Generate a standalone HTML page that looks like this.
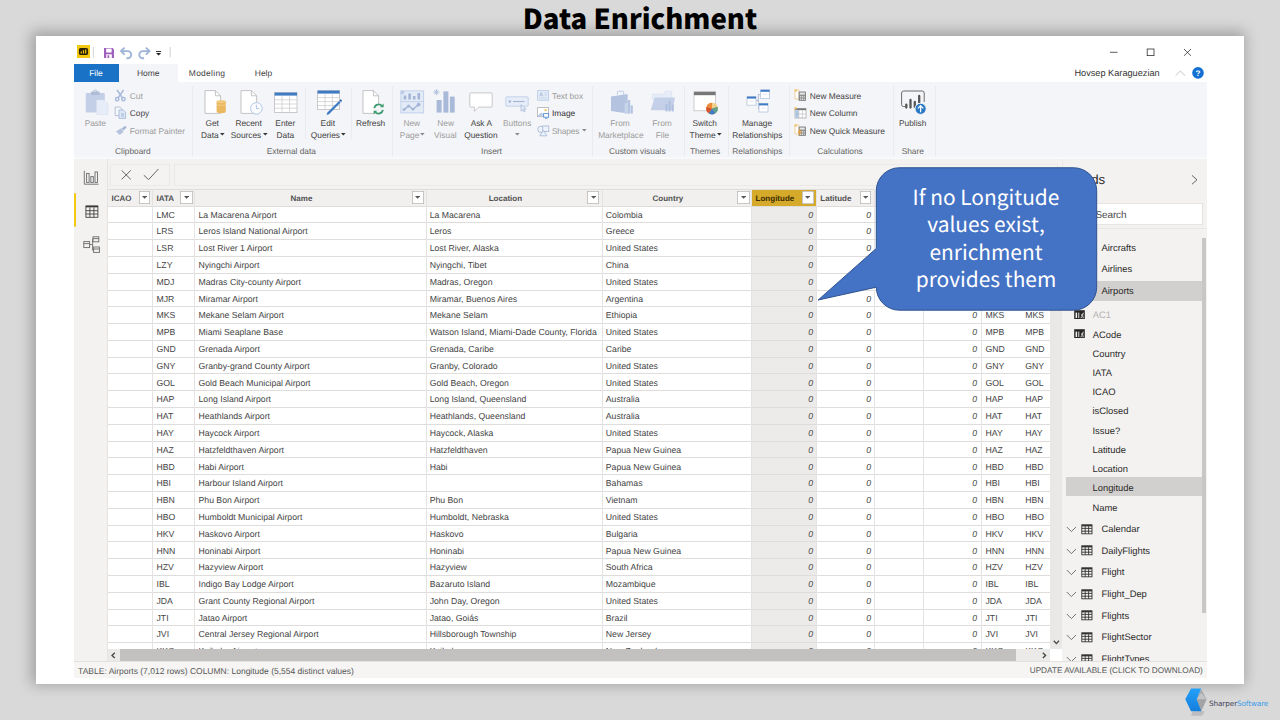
<!DOCTYPE html>
<html lang="en"><head><meta charset="utf-8"><title>Data Enrichment</title>
<style>
html,body{margin:0;padding:0}
body{width:1280px;height:720px;overflow:hidden;background:#d9d9d9;position:relative;font-family:"Liberation Sans",sans-serif;text-rendering:geometricPrecision}
#root{position:absolute;left:0;top:0;width:1280px;height:720px;opacity:.999}
.r{position:absolute;display:block}
.t{position:absolute;white-space:nowrap;display:block}
#win{position:absolute;left:36px;top:36px;width:1208px;height:648px;background:#fff;box-shadow:-2px -2px 13px 3px rgba(0,0,0,.25)}
#title{position:absolute;left:0;top:-2.7px;width:1280px;text-align:center;font-family:"Noto Sans CJK SC","Liberation Sans",sans-serif;font-weight:900;font-size:27.5px;line-height:40px;color:#000;white-space:nowrap}
</style></head><body>

<div id="root"><div id="win"></div>
<div id="title">Data Enrichment</div>
<div class="r" style="left:74.00px;top:63.50px;width:44.50px;height:18.00px;background:#1a72c7;"></div>
<span class="t" style="top:67px;font-size:8.5px;line-height:12px;color:#fff;left:-54.00px;width:300px;text-align:center;">File</span>
<div class="r" style="left:118.50px;top:63.50px;width:59.00px;height:19.50px;background:#f4f5f8;"></div>
<span class="t" style="top:67px;font-size:8.45px;line-height:12px;color:#444;left:-1.80px;width:300px;text-align:center;">Home</span>
<span class="t" style="top:67px;font-size:8.45px;line-height:12px;color:#444;letter-spacing:0.28px;left:57.10px;width:300px;text-align:center;">Modeling</span>
<span class="t" style="top:67px;font-size:8.45px;line-height:12px;color:#444;left:113.50px;width:300px;text-align:center;">Help</span>
<div class="r" style="left:74.00px;top:82.00px;width:1133.00px;height:77.40px;background:#f4f5f8;"></div>
<div class="r" style="left:74.00px;top:156.20px;width:1133.00px;height:3.20px;background:linear-gradient(#f4f5f8,#fafbfc);"></div>
<div class="r" style="left:74.00px;top:159.40px;width:1133.00px;height:519.00px;background:#f3f2f1;"></div>
<span class="t" style="top:67px;font-size:9.2px;line-height:12px;color:#333;left:1074.40px;">Hovsep Karaguezian</span>
<svg class="r" style="left:1105.00px;top:45.00px" width="95" height="15" viewBox="0 0 95 15"><g stroke="#333" stroke-width="0.8" fill="none"><path d="M5 7.3h7.5"/><rect x="42.2" y="4" width="6.8" height="6.6"/><path d="M79 4l7 6.8M86 4l-7 6.8"/></g></svg>
<svg class="r" style="left:1172.00px;top:66.00px" width="36" height="14" viewBox="0 0 36 14"><path d="M3.8 9.6l4.6-4.6 4.6 4.6" stroke="#bdbdbd" stroke-width="0.9" fill="none"/><circle cx="26" cy="6.9" r="5.8" fill="#1170d2"/></svg>
<span class="t" style="top:68px;font-size:8px;line-height:11px;color:#fff;font-weight:bold;left:1048.00px;width:300px;text-align:center;">?</span>
<svg class="r" style="left:76.00px;top:44.00px" width="100" height="16" viewBox="0 0 100 16">
<rect x="1" y="1" width="13" height="13" fill="#f2c811"/>
<rect x="2.900" y="4.100" width="9.200" height="6.800" rx="1.600" fill="#2b2300"/>
<path d="M5.300 9.600v-2M7.500 9.600v-3.400M9.700 9.600v-4.200" stroke="#f2c811" stroke-width="1.200"/>
<path d="M17.4 3v10.5" stroke="#c8c8c8" stroke-width="0.8"/>
<path d="M28 4h8.600l1.400 1.400v8.600h-10z" fill="#a061bd"/><rect x="30.200" y="4.600" width="5.400" height="3.900" fill="#fff"/><rect x="30.200" y="10.300" width="5.600" height="3.700" fill="#fff"/><rect x="31.500" y="11.200" width="1.700" height="2.800" fill="#a061bd"/>
<path d="M45.2 8.2h6.4a3.6 3.6 0 0 1 0 7.2h-1.2" fill="none" stroke="#9db4d8" stroke-width="1.9" transform="translate(0,-1.1)"/><path d="M48.6 3.600l-3.600 3.500 3.600 3.500" fill="none" stroke="#9db4d8" stroke-width="1.9"/>
<path d="M73.3 8.2h-6.4a3.6 3.6 0 0 0 0 7.2h1.2" fill="none" stroke="#9db4d8" stroke-width="1.9" transform="translate(0,-1.1)"/><path d="M69.900 3.600l3.600 3.500-3.600 3.500" fill="none" stroke="#9db4d8" stroke-width="1.9"/>
<path d="M80 7.500h5.200" stroke="#222" stroke-width="0.9"/><path d="M80 8.900h5.200l-2.600 2.500z" fill="#222"/>
<path d="M94.2 3v10.5" stroke="#c8c8c8" stroke-width="0.8"/>
</svg>
<svg class="r" style="left:84.00px;top:89.00px" width="26" height="27" viewBox="0 0 26 27"><rect x="1.800" y="4" width="19" height="19.600" rx="1" fill="#c3cfe6"/><rect x="7" y="2.400" width="8.600" height="3.600" rx=".8" fill="#aebcd8"/><rect x="9.700" y="1.200" width="3.200" height="2.400" rx="1" fill="none" stroke="#aebcd8" stroke-width="0.9"/>
<path d="M12.600 11h7.600l3.800 3.800v10.700h-11.400z" fill="#e6edf8" stroke="#d6dff0" stroke-width="0.6"/></svg>
<span class="t" style="top:117px;font-size:8.35px;line-height:12px;color:#9c9c9c;left:-54.70px;width:300px;text-align:center;">Paste</span>
<svg class="r" style="left:114.00px;top:89.00px" width="13" height="13" viewBox="0 0 13 13"><g fill="none" stroke="#a6b9db" stroke-width="1.400"><path d="M3 1l5.600 8M9.600 1L4 9"/><circle cx="3.2" cy="10.2" r="1.7"/><circle cx="9.4" cy="10.2" r="1.7"/></g></svg>
<span class="t" style="top:90px;font-size:8.35px;line-height:12px;color:#9c9c9c;left:129.75px;">Cut</span>
<svg class="r" style="left:114.00px;top:106.00px" width="13" height="13" viewBox="0 0 13 13"><path d="M1.2 1h4.6l2 2v6.6h-6.6z" fill="#f4f7fc" stroke="#aab4c6" stroke-width="0.8"/><path d="M5 4h4.4l2.2 2.2v6.2h-6.6z" fill="#dfe8f6" stroke="#9fb2d2" stroke-width="0.8"/><path d="M7 8h3M7 10h3" stroke="#7f9fd0" stroke-width="0.7"/></svg>
<span class="t" style="top:107px;font-size:8.35px;line-height:12px;color:#444;left:129.75px;">Copy</span>
<svg class="r" style="left:114.50px;top:124.50px" width="13" height="11" viewBox="0 0 13 11"><path d="M1 6.5l5-3.2 2.6 3.4-3.8 3.4z" fill="#b5c3df"/><path d="M6.6 3.6l3.6-2.8 1.4 1.6-3.2 3.2z" fill="#a5b6d8"/></svg>
<span class="t" style="top:125px;font-size:8.35px;line-height:12px;color:#9c9c9c;left:129.75px;">Format Painter</span>
<span class="t" style="top:145px;font-size:8.35px;line-height:12px;color:#666;left:-17.10px;width:300px;text-align:center;">Clipboard</span>
<div class="r" style="left:192.30px;top:86.00px;width:0.80px;height:70.00px;background:#eaebef;"></div>
<svg class="r" style="left:203.50px;top:89.60px" width="24" height="25" viewBox="0 0 24 25"><path d="M1 .6h10.4l5.2 5.2v17.6h-15.6z" fill="#fff" stroke="#bdbdbd" stroke-width="0.9"/><path d="M11.4 .6v5.2h5.2" fill="none" stroke="#bdbdbd" stroke-width="0.9"/><path d="M12.6 11.6v10a4.6 1.6 0 0 0 9.2 0v-10z" fill="#e9b85f"/><ellipse cx="17.2" cy="11.6" rx="4.6" ry="1.6" fill="#f0c87e"/><path d="M12.6 13.8a4.6 1.6 0 0 0 9.2 0" fill="none" stroke="#f7ddb0" stroke-width="0.6"/></svg>
<span class="t" style="top:117px;font-size:8.35px;line-height:12px;color:#444;left:62.20px;width:300px;text-align:center;">Get</span>
<span class="t" style="top:129px;font-size:8.35px;line-height:12px;color:#444;left:59.80px;width:300px;text-align:center;">Data</span>
<svg class="r" style="left:220.20px;top:133.00px" width="5" height="3" viewBox="0 0 5 3"><path d="M0 0h4.6l-2.3 2.6z" fill="#333"/></svg>
<svg class="r" style="left:239.50px;top:89.60px" width="24" height="26" viewBox="0 0 24 26"><path d="M1 .6h10.4l5.2 5.2v17.6h-15.6z" fill="#fff" stroke="#bdbdbd" stroke-width="0.9"/><path d="M11.4 .6v5.2h5.2" fill="none" stroke="#bdbdbd" stroke-width="0.9"/><circle cx="16.4" cy="18.4" r="5.8" fill="#fbfcfe" stroke="#a9c0e4" stroke-width="0.9"/><path d="M16.4 14.8v3.8h2.8" fill="none" stroke="#a9c0e4" stroke-width="0.9"/></svg>
<span class="t" style="top:117px;font-size:8.35px;line-height:12px;color:#444;left:98.60px;width:300px;text-align:center;">Recent</span>
<span class="t" style="top:129px;font-size:8.35px;line-height:12px;color:#444;left:96.00px;width:300px;text-align:center;">Sources</span>
<svg class="r" style="left:262.60px;top:133.00px" width="5" height="3" viewBox="0 0 5 3"><path d="M0 0h4.6l-2.3 2.6z" fill="#333"/></svg>
<svg class="r" style="left:273.50px;top:91.50px" width="24" height="22" viewBox="0 0 24 22"><rect x=".6" y=".6" width="22.4" height="20" fill="#fff" stroke="#bdbdbd" stroke-width="0.8"/><rect x=".6" y=".6" width="22.4" height="3" fill="#3f7bc4"/><path d="M.6 7.8h22.4M.6 12h22.4M.6 16.2h22.4M8 3.6v17M15.6 3.6v17" stroke="#c9c9c9" stroke-width="0.7" fill="none"/></svg>
<span class="t" style="top:117px;font-size:8.35px;line-height:12px;color:#444;left:135.30px;width:300px;text-align:center;">Enter</span>
<span class="t" style="top:129px;font-size:8.35px;line-height:12px;color:#444;left:135.30px;width:300px;text-align:center;">Data</span>
<div class="r" style="left:305.20px;top:88.00px;width:0.80px;height:51.00px;background:#eaebef;"></div>
<svg class="r" style="left:316.50px;top:90.00px" width="25" height="25" viewBox="0 0 25 25"><rect x=".6" y=".6" width="22" height="19" fill="#fff" stroke="#bdbdbd" stroke-width="0.8"/><rect x=".6" y=".6" width="22" height="3" fill="#3f7bc4"/><path d="M.6 7.6h22M.6 11.6h22M.6 15.6h22M8 3.6v16M15.4 3.6v16" stroke="#c9c9c9" stroke-width="0.7" fill="none"/><path d="M10.4 22.6l11.6-11.6 1.6 1.6-11.6 11.6-2.4.8z" fill="#3f7bc4"/><path d="M22.4 10.4l1.2-1.2 1.6 1.6-1.2 1.2z" fill="#2f62a4"/></svg>
<span class="t" style="top:117px;font-size:8.35px;line-height:12px;color:#444;left:177.80px;width:300px;text-align:center;">Edit</span>
<span class="t" style="top:129px;font-size:8.35px;line-height:12px;color:#444;left:175.40px;width:300px;text-align:center;">Queries</span>
<svg class="r" style="left:341.30px;top:133.00px" width="5" height="3" viewBox="0 0 5 3"><path d="M0 0h4.6l-2.3 2.6z" fill="#333"/></svg>
<span class="t" style="top:145px;font-size:8.35px;line-height:12px;color:#666;left:141.40px;width:300px;text-align:center;">External data</span>
<div class="r" style="left:350.85px;top:88.00px;width:0.80px;height:51.00px;background:#eaebef;"></div>
<svg class="r" style="left:361.50px;top:89.60px" width="26" height="26" viewBox="0 0 26 26"><path d="M1 .6h10.4l5.2 5.2v17.6h-15.6z" fill="#fff" stroke="#bdbdbd" stroke-width="0.9"/><path d="M11.4 .6v5.2h5.2" fill="none" stroke="#bdbdbd" stroke-width="0.9"/><circle cx="16.6" cy="19" r="5.6" fill="#f4f5f8"/><path d="M12.4 18.2a4.3 4.3 0 0 1 7.6-2.2" fill="none" stroke="#3d9b6f" stroke-width="1.7"/><path d="M21.6 13.6v3.6h-3.6z" fill="#3d9b6f"/><path d="M20.8 19.8a4.3 4.3 0 0 1-7.6 2.2" fill="none" stroke="#3d9b6f" stroke-width="1.7"/><path d="M11.6 24.4v-3.6h3.6z" fill="#3d9b6f"/></svg>
<span class="t" style="top:117px;font-size:8.35px;line-height:12px;color:#444;left:220.60px;width:300px;text-align:center;">Refresh</span>
<div class="r" style="left:392.35px;top:86.00px;width:0.80px;height:70.00px;background:#eaebef;"></div>
<svg class="r" style="left:399.50px;top:90.00px" width="25" height="24" viewBox="0 0 25 24"><rect x=".9" y=".9" width="22.8" height="22" fill="#e3ebf7" stroke="#b9c9e6" stroke-width="0.8"/><path d="M.9 11.6h22.8" stroke="#b9c9e6" stroke-width="0.8"/><path d="M5 9.6v-4.2M9.6 9.6v-6M14.2 9.6v-3.6M18.8 9.6v-6.6" stroke="#a3b5d6" stroke-width="2.6"/><path d="M4 19.6l4.6-3.6 4.4 3.2 5.6-4.6" fill="none" stroke="#a3b5d6" stroke-width="1.400"/><circle cx="4" cy="19.600" r="1.400" fill="#a3b5d6"/><circle cx="8.600" cy="16" r="1.500" fill="#a3b5d6"/><circle cx="13" cy="19.200" r="1.400" fill="#a3b5d6"/><circle cx="18.600" cy="14.600" r="1.900" fill="#a3b5d6"/><path d="M2.4 0v5M0 2.4h5M.7.7l3.4 3.4M4.1.7L.7 4.1" stroke="#b5c5e3" stroke-width="0.7"/></svg>
<span class="t" style="top:117px;font-size:8.35px;line-height:12px;color:#9c9c9c;left:261.75px;width:300px;text-align:center;">New</span>
<span class="t" style="top:129px;font-size:8.35px;line-height:12px;color:#9c9c9c;left:259.60px;width:300px;text-align:center;">Page</span>
<svg class="r" style="left:420.40px;top:133.00px" width="5" height="3" viewBox="0 0 5 3"><path d="M0 0h4.6l-2.3 2.6z" fill="#888"/></svg>
<svg class="r" style="left:432.50px;top:89.20px" width="23" height="25" viewBox="0 0 23 25"><rect x="3.600" y="11" width="5" height="12.600" fill="#a9bad9"/><rect x="10.400" y="2.400" width="5" height="21.200" fill="#a9bad9"/><rect x="16.900" y="7.600" width="4.800" height="16" fill="#a9bad9"/><path d="M3.4.2v6M.4 3.2h6M1.3 1.1l4.2 4.2M5.5 1.1L1.3 5.3" stroke="#b0c1e0" stroke-width="1"/></svg>
<span class="t" style="top:117px;font-size:8.35px;line-height:12px;color:#9c9c9c;left:295.60px;width:300px;text-align:center;">New</span>
<span class="t" style="top:129px;font-size:8.35px;line-height:12px;color:#9c9c9c;left:295.40px;width:300px;text-align:center;">Visual</span>
<svg class="r" style="left:469.00px;top:91.50px" width="26" height="21" viewBox="0 0 26 21"><path d="M1.6.9h20.8a.8.8 0 0 1 .8.8v12.6a.8.8 0 0 1-.8.8h-12.8l-4.2 4.2v-4.2h-3.8a.8.8 0 0 1-.8-.8v-12.6a.8.8 0 0 1 .8-.8z" fill="#fff" stroke="#c2c2c2" stroke-width="0.9"/></svg>
<span class="t" style="top:117px;font-size:8.35px;line-height:12px;color:#444;left:331.30px;width:300px;text-align:center;">Ask A</span>
<span class="t" style="top:129px;font-size:8.35px;line-height:12px;color:#444;left:330.90px;width:300px;text-align:center;">Question</span>
<svg class="r" style="left:505.00px;top:95.60px" width="25" height="17" viewBox="0 0 25 17"><rect x=".8" y=".8" width="22.4" height="9.4" rx="1" fill="#e6edf8" stroke="#b9c9e6" stroke-width="0.8"/><circle cx="4.8" cy="5.5" r="1.3" fill="#a3b5d6"/><path d="M8 5.5h11.6" stroke="#a3b5d6" stroke-width="1.1"/><path d="M16 8.6v6.6l1.8-1.6 1.2 2.4 1-.5-1.2-2.3h2.3z" fill="#e6edf8" stroke="#a3b5d6" stroke-width="0.7"/></svg>
<span class="t" style="top:117px;font-size:8.35px;line-height:12px;color:#9c9c9c;left:367.20px;width:300px;text-align:center;">Buttons</span>
<svg class="r" style="left:514.70px;top:133.00px" width="5" height="3" viewBox="0 0 5 3"><path d="M0 0h4.6l-2.3 2.6z" fill="#888"/></svg>
<svg class="r" style="left:536.80px;top:89.60px" width="13" height="11" viewBox="0 0 13 11"><rect x=".6" y=".6" width="11" height="9.6" fill="#e3ebf7" stroke="#b9c9e6" stroke-width="0.8"/><path d="M2.6 6.4l1.6-4 1.6 4M3.2 5h2" fill="none" stroke="#a3b5d6" stroke-width="0.7"/><path d="M7.4 3h2.8M7.4 5h2.8M2.4 8h7.8" stroke="#b9c9e6" stroke-width="0.6"/></svg>
<span class="t" style="top:90px;font-size:8.35px;line-height:12px;color:#9c9c9c;left:552.00px;">Text box</span>
<svg class="r" style="left:536.80px;top:106.60px" width="13" height="12" viewBox="0 0 13 12"><rect x=".6" y=".6" width="11" height="9" fill="#fff" stroke="#b0b0b0" stroke-width="0.8"/><circle cx="8.600" cy="3.200" r="1.1" fill="#f0c04f"/><path d="M1 9.4l3.2-3.4 2.4 2.2" fill="#b8cdea" stroke="#7ea2d8" stroke-width="0.6"/><rect x="6.6" y="6.6" width="5" height="3.6" fill="#fff" stroke="#5b8fd6" stroke-width="0.9"/><path d="M8 11.4h2.4" stroke="#5b8fd6" stroke-width="0.8"/></svg>
<span class="t" style="top:107px;font-size:8.35px;line-height:12px;color:#333;left:552.00px;">Image</span>
<svg class="r" style="left:536.80px;top:124.60px" width="13" height="12" viewBox="0 0 13 12"><g fill="#eef2fa" stroke="#a3b5d6" stroke-width="0.8"><circle cx="4" cy="4.4" r="3.2"/><rect x="5.8" y="1" width="6" height="5.6"/><path d="M6.4 5.4l3.6 5.4h-7.2z"/></g></svg>
<span class="t" style="top:125px;font-size:8.35px;line-height:12px;color:#9c9c9c;letter-spacing:-0.2px;left:552.00px;">Shapes</span>
<svg class="r" style="left:581.60px;top:128.80px" width="5" height="3" viewBox="0 0 5 3"><path d="M0 0h4.6l-2.3 2.6z" fill="#888"/></svg>
<span class="t" style="top:145px;font-size:8.35px;line-height:12px;color:#666;left:341.50px;width:300px;text-align:center;">Insert</span>
<div class="r" style="left:592.35px;top:86.00px;width:0.80px;height:70.00px;background:#eaebef;"></div>
<svg class="r" style="left:609.50px;top:89.60px" width="24" height="25" viewBox="0 0 24 25"><path d="M7.4 4.6v-2.4a1 1 0 0 1 1-1h4.2a1 1 0 0 1 1 1v2.4" fill="none" stroke="#b7c6e2" stroke-width="0.9"/><path d="M1 6.4l16.6-2.4v19.6l-16.6-2.6z" fill="#b3c3e0"/><rect x="14.6" y="13" width="2.6" height="10.6" fill="#c9d5ea"/><rect x="17.8" y="10" width="2.4" height="13.6" fill="#b3c3e0"/><rect x="20.6" y="15.4" width="2.2" height="8.2" fill="#b3c3e0"/></svg>
<span class="t" style="top:117px;font-size:8.35px;line-height:12px;color:#9c9c9c;left:470.00px;width:300px;text-align:center;">From</span>
<span class="t" style="top:129px;font-size:8.35px;line-height:12px;color:#9c9c9c;left:470.90px;width:300px;text-align:center;">Marketplace</span>
<svg class="r" style="left:648px;top:88px" width="30" height="26" viewBox="648 88 30 26"><path d="M652.400 94.200h10.800l2.400-3h6.200v8h-19.400z" fill="#e6edf8" stroke="#d5dff0" stroke-width="0.6"/><path d="M654.600 97.400h20.400l-2.400 12.800h-21.800z" fill="#c3d0e8"/><rect x="665.400" y="104" width="2.100" height="7.400" fill="#b0c0de"/><rect x="668.500" y="101" width="2.100" height="10.400" fill="#b0c0de"/><rect x="671.700" y="104.600" width="2.100" height="6.800" fill="#b0c0de"/></svg>
<span class="t" style="top:117px;font-size:8.35px;line-height:12px;color:#9c9c9c;left:512.00px;width:300px;text-align:center;">From</span>
<span class="t" style="top:129px;font-size:8.35px;line-height:12px;color:#9c9c9c;left:512.50px;width:300px;text-align:center;">File</span>
<span class="t" style="top:145px;font-size:8.35px;line-height:12px;color:#666;left:487.30px;width:300px;text-align:center;">Custom visuals</span>
<div class="r" style="left:683.60px;top:86.00px;width:0.80px;height:70.00px;background:#eaebef;"></div>
<svg class="r" style="left:693.00px;top:91.40px" width="26" height="25" viewBox="0 0 26 25"><rect x="1" y=".8" width="21.6" height="19" fill="#fff" stroke="#c2c2c2" stroke-width="0.8"/><rect x="1" y=".8" width="21.6" height="3.4" fill="#777"/><circle cx="19" cy="17.6" r="5.8" fill="#e9b35a"/><path d="M19 17.6v-5.8a5.8 5.8 0 0 1 5.5 4z" fill="#f1d08c"/><path d="M19 17.6l5.5-1.8a5.8 5.8 0 0 1-2.1 6.5z" fill="#5fa08c"/><path d="M19 17.6l3.4 4.7a5.8 5.8 0 0 1-6.8 0z" fill="#3f7bc4"/><path d="M19 17.6l-3.4 4.7a5.8 5.8 0 0 1-2.1-6.5z" fill="#d9542c"/><path d="M19 17.6l-5.5-1.8a5.800 5.800 0 0 1 5.500-4z" fill="#ee8b3a"/></svg>
<span class="t" style="top:117px;font-size:8.35px;line-height:12px;color:#444;left:554.70px;width:300px;text-align:center;">Switch</span>
<span class="t" style="top:129px;font-size:8.35px;line-height:12px;color:#444;left:552.60px;width:300px;text-align:center;">Theme</span>
<svg class="r" style="left:717.00px;top:133.00px" width="5" height="3" viewBox="0 0 5 3"><path d="M0 0h4.6l-2.3 2.6z" fill="#333"/></svg>
<span class="t" style="top:145px;font-size:8.35px;line-height:12px;color:#666;left:555.00px;width:300px;text-align:center;">Themes</span>
<div class="r" style="left:728.35px;top:86.00px;width:0.80px;height:70.00px;background:#eaebef;"></div>
<svg class="r" style="left:745.50px;top:88.80px" width="26" height="25" viewBox="0 0 26 25"><path d="M10 11.6h2.4v-6h2.4M12.4 11.600v8.4h2" fill="none" stroke="#9fb1d2" stroke-width="0.8"/><rect x="1" y="7.6" width="9" height="8.6" fill="#fff" stroke="#b5c3dc" stroke-width="0.8"/><rect x="1" y="7.6" width="9" height="2" fill="#3f7bc4"/><path d="M3.4 12.2h4.2" stroke="#d0d8e8" stroke-width="0.6"/><rect x="14.6" y="0.8" width="9" height="8.6" fill="#fff" stroke="#b5c3dc" stroke-width="0.8"/><rect x="14.6" y="0.8" width="9" height="2" fill="#3f7bc4"/><path d="M17.0 5.3999999999999995h4.2" stroke="#d0d8e8" stroke-width="0.6"/><rect x="13" y="14.4" width="9" height="8.6" fill="#fff" stroke="#b5c3dc" stroke-width="0.8"/><rect x="13" y="14.4" width="9" height="2" fill="#3f7bc4"/><path d="M15.4 19.0h4.2" stroke="#d0d8e8" stroke-width="0.6"/></svg>
<span class="t" style="top:117px;font-size:8.35px;line-height:12px;color:#444;left:607.00px;width:300px;text-align:center;">Manage</span>
<span class="t" style="top:129px;font-size:8.35px;line-height:12px;color:#444;left:607.40px;width:300px;text-align:center;">Relationships</span>
<span class="t" style="top:145px;font-size:8.35px;line-height:12px;color:#666;left:607.40px;width:300px;text-align:center;">Relationships</span>
<div class="r" style="left:788.60px;top:86.00px;width:0.80px;height:70.00px;background:#eaebef;"></div>
<svg class="r" style="left:794.40px;top:89.40px" width="13" height="13" viewBox="0 0 13 13"><path d="M1 1h4v9h-4z" fill="#fff" stroke="#e8c07a" stroke-width="0.7"/><rect x=".6" y=".4" width="2.4" height="2.2" fill="#f0c46e"/><rect x="4.6" y="2.4" width="7.4" height="9.6" rx=".8" fill="#8a8a8a"/><rect x="5.8" y="3.6" width="5" height="2" fill="#e8e8e8"/><path d="M6 7.400h1.200M7.800 7.400h1.200M9.600 7.400h1.200M6 9h1.200M7.800 9h1.200M9.600 9h1.200M6 10.600h1.200M7.800 10.600h1.200M9.600 10.600h1.200" stroke="#e8e8e8" stroke-width="0.9"/></svg>
<span class="t" style="top:90px;font-size:8.35px;line-height:12px;color:#444;left:809.75px;">New Measure</span>
<svg class="r" style="left:794.40px;top:106.60px" width="13" height="12" viewBox="0 0 13 12"><rect x="1" y="1.400" width="11" height="9.600" fill="#fff" stroke="#9e9e9e" stroke-width="0.7"/><rect x="1" y="1.400" width="11" height="1.800" fill="#777"/><rect x="1.400" y="3.400" width="3.200" height="7.400" fill="#a9c6ea"/><path d="M4.800 3.200v7.800M8.400 3.200v7.800M1 7h11" stroke="#b5b5b5" stroke-width="0.6"/><rect x=".4" y=".2" width="2.400" height="2.200" fill="#f0c46e"/></svg>
<span class="t" style="top:107px;font-size:8.35px;line-height:12px;color:#444;left:809.75px;">New Column</span>
<svg class="r" style="left:794.40px;top:124.00px" width="13" height="13" viewBox="0 0 13 13"><path d="M1 1h4v9h-4z" fill="#fff" stroke="#e8c07a" stroke-width="0.7"/><rect x=".6" y=".4" width="2.400" height="2.200" fill="#f0c46e"/><rect x="4.600" y="2.400" width="7.400" height="9.600" rx=".8" fill="#8a8a8a"/><rect x="5.800" y="3.600" width="5" height="2" fill="#e8e8e8"/><path d="M6 7.400h4.800M6 9h4.800M6 10.600h4.800" stroke="#e8e8e8" stroke-width="0.9" stroke-dasharray="1.2 .6"/><path d="M6.400 4.600l-3 4h2.200l-1.200 3.600 3.600-4.800h-2.200z" fill="#f0a030"/></svg>
<span class="t" style="top:125px;font-size:8.35px;line-height:12px;color:#444;left:809.75px;">New Quick Measure</span>
<span class="t" style="top:145px;font-size:8.35px;line-height:12px;color:#666;left:690.00px;width:300px;text-align:center;">Calculations</span>
<div class="r" style="left:892.60px;top:86.00px;width:0.80px;height:70.00px;background:#eaebef;"></div>
<svg class="r" style="left:899.50px;top:90.40px" width="28" height="25" viewBox="0 0 28 25"><path d="M5 16.600h-1.400a2 2 0 0 1-2-2v-11.600a2 2 0 0 1 2-2h18.600a2 2 0 0 1 2 2v9" fill="none" stroke="#6a6a6a" stroke-width="1"/><path d="M6.300 17.600v-3M10.500 17.600v-7.600M14.800 17v-5M19.200 12.600v-6.600" stroke="#555" stroke-width="2.300" stroke-linecap="round"/><circle cx="20.600" cy="18.800" r="5.600" fill="#2b78c5" stroke="#f4f5f8" stroke-width="1"/><path d="M20.600 22.200v-6.200M17.900 18.400l2.700-2.800 2.700 2.800" fill="none" stroke="#fff" stroke-width="1.300"/></svg>
<span class="t" style="top:117px;font-size:8.35px;line-height:12px;color:#444;left:762.70px;width:300px;text-align:center;">Publish</span>
<span class="t" style="top:145px;font-size:8.35px;line-height:12px;color:#666;left:762.80px;width:300px;text-align:center;">Share</span>
<div class="r" style="left:934.60px;top:86.00px;width:0.80px;height:70.00px;background:#eaebef;"></div>
<div class="r" style="left:106.60px;top:159.40px;width:0.80px;height:502.60px;background:#e6e4e2;"></div>
<div class="r" style="left:73.70px;top:193.30px;width:2.50px;height:34.10px;background:#f2c811;border-radius:1.2px"></div>
<svg class="r" style="left:83.00px;top:170.00px" width="17" height="16" viewBox="0 0 17 16"><g fill="none" stroke="#6a6a6a" stroke-width="0.9"><path d="M1.300 .8v13.400h14.200"/><rect x="3.600" y="3.400" width="2.500" height="9"/><rect x="7.800" y="6.600" width="2.500" height="5.800"/><rect x="12" y="2" width="2.500" height="10.400"/></g></svg>
<svg class="r" style="left:84.60px;top:204.60px" width="14" height="13.4" viewBox="0 0 14 13.4"><g fill="none" stroke="#3a3a3a" stroke-width="0.85"><rect x=".9" y=".9" width="12" height="11.400"/><path d="M.9 5.700h12M.9 9h12M4.900 2.400v9.900M8.900 2.400v9.900"/><path d="M.9 1.600h12" stroke-width="1.500"/></g></svg>
<svg class="r" style="left:82.60px;top:236.40px" width="18" height="17.4" viewBox="0 0 18 17.4"><g fill="#f3f2f1" stroke="#6a6a6a" stroke-width="0.9"><path d="M6.600 8.600h3v-5.400h1.600M9.600 8.600v5.600h1.600" fill="none"/><rect x=".8" y="5.600" width="5.800" height="6"/><rect x="10" y=".8" width="5.800" height="5"/><rect x="10.600" y="11" width="5.800" height="5.400"/><path d="M.8 7.600h5.800M10 2.600h5.800M10.600 13h5.800" fill="none"/></g></svg>
<div class="r" style="left:110.25px;top:164.40px;width:59.75px;height:21.20px;background:#f4f3f2;box-shadow:inset 0 0 0 .8px #e9e7e5"></div>
<div class="r" style="left:174.40px;top:164.40px;width:883.60px;height:21.20px;background:#f4f3f2;box-shadow:inset 0 0 0 .8px #e9e7e5"></div>
<svg class="r" style="left:120.00px;top:167.00px" width="42" height="14" viewBox="0 0 42 14"><g fill="none" stroke="#555" stroke-width="0.9"><path d="M1.600 3.400l9.200 9M10.800 3.400l-9.200 9"/><path d="M23.800 8.200l4.800 4.400 9.800-10.600"/></g></svg>
<div class="r" style="left:107.6px;top:189.3px;width:942.4px;height:459.45px;overflow:hidden;background:#fff">
<div class="r" style="left:-107.6px;top:-189.3px;width:1280px;height:720px">
<div class="r" style="left:107.60px;top:189.30px;width:942.40px;height:16.70px;background:#f1f0ef;"></div>
<div class="r" style="left:751.50px;top:189.30px;width:64.80px;height:16.70px;background:#d5a92a;"></div>
<div class="r" style="left:751.90px;top:206.00px;width:64.40px;height:442.75px;background:#edebe9;"></div>
<div class="r" style="left:107.60px;top:188.90px;width:942.40px;height:0.80px;background:#dfdddb;"></div>
<div class="r" style="left:107.60px;top:205.55px;width:942.40px;height:0.90px;background:#dfdddb;"></div>
<div class="r" style="left:107.60px;top:222.34px;width:942.40px;height:0.90px;background:#dfdddb;"></div>
<div class="r" style="left:107.60px;top:239.13px;width:942.40px;height:0.90px;background:#dfdddb;"></div>
<div class="r" style="left:107.60px;top:255.92px;width:942.40px;height:0.90px;background:#dfdddb;"></div>
<div class="r" style="left:107.60px;top:272.71px;width:942.40px;height:0.90px;background:#dfdddb;"></div>
<div class="r" style="left:107.60px;top:289.50px;width:942.40px;height:0.90px;background:#dfdddb;"></div>
<div class="r" style="left:107.60px;top:306.29px;width:942.40px;height:0.90px;background:#dfdddb;"></div>
<div class="r" style="left:107.60px;top:323.08px;width:942.40px;height:0.90px;background:#dfdddb;"></div>
<div class="r" style="left:107.60px;top:339.87px;width:942.40px;height:0.90px;background:#dfdddb;"></div>
<div class="r" style="left:107.60px;top:356.66px;width:942.40px;height:0.90px;background:#dfdddb;"></div>
<div class="r" style="left:107.60px;top:373.45px;width:942.40px;height:0.90px;background:#dfdddb;"></div>
<div class="r" style="left:107.60px;top:390.24px;width:942.40px;height:0.90px;background:#dfdddb;"></div>
<div class="r" style="left:107.60px;top:407.03px;width:942.40px;height:0.90px;background:#dfdddb;"></div>
<div class="r" style="left:107.60px;top:423.82px;width:942.40px;height:0.90px;background:#dfdddb;"></div>
<div class="r" style="left:107.60px;top:440.61px;width:942.40px;height:0.90px;background:#dfdddb;"></div>
<div class="r" style="left:107.60px;top:457.40px;width:942.40px;height:0.90px;background:#dfdddb;"></div>
<div class="r" style="left:107.60px;top:474.19px;width:942.40px;height:0.90px;background:#dfdddb;"></div>
<div class="r" style="left:107.60px;top:490.98px;width:942.40px;height:0.90px;background:#dfdddb;"></div>
<div class="r" style="left:107.60px;top:507.77px;width:942.40px;height:0.90px;background:#dfdddb;"></div>
<div class="r" style="left:107.60px;top:524.56px;width:942.40px;height:0.90px;background:#dfdddb;"></div>
<div class="r" style="left:107.60px;top:541.35px;width:942.40px;height:0.90px;background:#dfdddb;"></div>
<div class="r" style="left:107.60px;top:558.14px;width:942.40px;height:0.90px;background:#dfdddb;"></div>
<div class="r" style="left:107.60px;top:574.93px;width:942.40px;height:0.90px;background:#dfdddb;"></div>
<div class="r" style="left:107.60px;top:591.72px;width:942.40px;height:0.90px;background:#dfdddb;"></div>
<div class="r" style="left:107.60px;top:608.51px;width:942.40px;height:0.90px;background:#dfdddb;"></div>
<div class="r" style="left:107.60px;top:625.30px;width:942.40px;height:0.90px;background:#dfdddb;"></div>
<div class="r" style="left:107.60px;top:642.09px;width:942.40px;height:0.90px;background:#dfdddb;"></div>
<div class="r" style="left:107.60px;top:658.88px;width:942.40px;height:0.90px;background:#dfdddb;"></div>
<div class="r" style="left:151.80px;top:189.30px;width:0.90px;height:459.45px;background:#e5e3e1;"></div>
<div class="r" style="left:193.95px;top:189.30px;width:0.90px;height:459.45px;background:#e5e3e1;"></div>
<div class="r" style="left:425.85px;top:189.30px;width:0.90px;height:459.45px;background:#e5e3e1;"></div>
<div class="r" style="left:601.75px;top:189.30px;width:0.90px;height:459.45px;background:#e5e3e1;"></div>
<div class="r" style="left:751.05px;top:189.30px;width:0.90px;height:459.45px;background:#e5e3e1;"></div>
<div class="r" style="left:815.85px;top:189.30px;width:0.90px;height:459.45px;background:#e5e3e1;"></div>
<div class="r" style="left:873.95px;top:189.30px;width:0.90px;height:459.45px;background:#e5e3e1;"></div>
<div class="r" style="left:922.75px;top:189.30px;width:0.90px;height:459.45px;background:#e5e3e1;"></div>
<div class="r" style="left:980.65px;top:189.30px;width:0.90px;height:459.45px;background:#e5e3e1;"></div>
<span class="t" style="top:193px;font-size:8.0px;line-height:11px;color:#505050;font-weight:bold;left:111.50px;">ICAO</span>
<div class="r" style="left:138.50px;top:191.30px;width:11.75px;height:12.30px;background:#fff;box-shadow:inset 0 0 0 .8px #b9b7b5"></div>
<svg class="r" style="left:141.78px;top:196.20px" width="5.2" height="3" viewBox="0 0 5.2 3"><path d="M0 0h5.200l-2.600 2.800z" fill="#555"/></svg>
<span class="t" style="top:193px;font-size:8.0px;line-height:11px;color:#505050;font-weight:bold;left:156.50px;">IATA</span>
<div class="r" style="left:180.25px;top:191.30px;width:12.25px;height:12.30px;background:#fff;box-shadow:inset 0 0 0 .8px #b9b7b5"></div>
<svg class="r" style="left:183.78px;top:196.20px" width="5.2" height="3" viewBox="0 0 5.2 3"><path d="M0 0h5.200l-2.600 2.800z" fill="#555"/></svg>
<span class="t" style="top:193px;font-size:8.0px;line-height:11px;color:#505050;font-weight:bold;left:151.50px;width:300px;text-align:center;">Name</span>
<div class="r" style="left:411.50px;top:191.30px;width:12.00px;height:12.30px;background:#fff;box-shadow:inset 0 0 0 .8px #b9b7b5"></div>
<svg class="r" style="left:414.90px;top:196.20px" width="5.2" height="3" viewBox="0 0 5.2 3"><path d="M0 0h5.200l-2.600 2.800z" fill="#555"/></svg>
<span class="t" style="top:193px;font-size:8.0px;line-height:11px;color:#505050;font-weight:bold;left:355.40px;width:300px;text-align:center;">Location</span>
<div class="r" style="left:587.20px;top:191.30px;width:12.20px;height:12.30px;background:#fff;box-shadow:inset 0 0 0 .8px #b9b7b5"></div>
<svg class="r" style="left:590.70px;top:196.20px" width="5.2" height="3" viewBox="0 0 5.2 3"><path d="M0 0h5.200l-2.600 2.800z" fill="#555"/></svg>
<span class="t" style="top:193px;font-size:8.0px;line-height:11px;color:#505050;font-weight:bold;left:517.90px;width:300px;text-align:center;">Country</span>
<div class="r" style="left:736.90px;top:191.30px;width:12.70px;height:12.30px;background:#fff;box-shadow:inset 0 0 0 .8px #b9b7b5"></div>
<svg class="r" style="left:740.65px;top:196.20px" width="5.2" height="3" viewBox="0 0 5.2 3"><path d="M0 0h5.200l-2.600 2.800z" fill="#555"/></svg>
<span class="t" style="top:193px;font-size:8.0px;line-height:11px;color:#3a2c00;font-weight:bold;left:755.60px;">Longitude</span>
<div class="r" style="left:802.00px;top:191.30px;width:11.75px;height:12.30px;background:#fff;box-shadow:inset 0 0 0 .8px #b9b7b5"></div>
<svg class="r" style="left:805.27px;top:196.20px" width="5.2" height="3" viewBox="0 0 5.2 3"><path d="M0 0h5.200l-2.600 2.800z" fill="#555"/></svg>
<span class="t" style="top:193px;font-size:8.0px;line-height:11px;color:#505050;font-weight:bold;left:820.30px;">Latitude</span>
<div class="r" style="left:859.70px;top:191.30px;width:11.80px;height:12.30px;background:#fff;box-shadow:inset 0 0 0 .8px #b9b7b5"></div>
<svg class="r" style="left:863.00px;top:196.20px" width="5.2" height="3" viewBox="0 0 5.2 3"><path d="M0 0h5.200l-2.600 2.800z" fill="#555"/></svg>
<span class="t" style="top:209px;font-size:8.7px;line-height:12px;color:#444;left:156.50px;">LMC</span>
<span class="t" style="top:209px;font-size:8.7px;line-height:12px;color:#444;left:198.50px;">La Macarena Airport</span>
<span class="t" style="top:209px;font-size:8.7px;line-height:12px;color:#444;left:429.70px;">La Macarena</span>
<span class="t" style="top:209px;font-size:8.7px;line-height:12px;color:#444;left:605.80px;">Colombia</span>
<span class="t" style="top:209px;font-size:8.7px;line-height:12px;color:#444;font-style:italic;left:513.00px;width:300px;text-align:right;">0</span>
<span class="t" style="top:209px;font-size:8.7px;line-height:12px;color:#444;font-style:italic;left:571.20px;width:300px;text-align:right;">0</span>
<span class="t" style="top:209px;font-size:8.7px;line-height:12px;color:#444;font-style:italic;left:677.20px;width:300px;text-align:right;">0</span>
<span class="t" style="top:209px;font-size:8.7px;line-height:12px;color:#444;left:985.50px;">LMC</span>
<span class="t" style="top:209px;font-size:8.7px;line-height:12px;color:#444;left:1025.30px;">LMC</span>
<span class="t" style="top:225px;font-size:8.7px;line-height:12px;color:#444;left:156.50px;">LRS</span>
<span class="t" style="top:225px;font-size:8.7px;line-height:12px;color:#444;left:198.50px;">Leros Island National Airport</span>
<span class="t" style="top:225px;font-size:8.7px;line-height:12px;color:#444;left:429.70px;">Leros</span>
<span class="t" style="top:225px;font-size:8.7px;line-height:12px;color:#444;left:605.80px;">Greece</span>
<span class="t" style="top:225px;font-size:8.7px;line-height:12px;color:#444;font-style:italic;left:513.00px;width:300px;text-align:right;">0</span>
<span class="t" style="top:225px;font-size:8.7px;line-height:12px;color:#444;font-style:italic;left:571.20px;width:300px;text-align:right;">0</span>
<span class="t" style="top:225px;font-size:8.7px;line-height:12px;color:#444;font-style:italic;left:677.20px;width:300px;text-align:right;">0</span>
<span class="t" style="top:225px;font-size:8.7px;line-height:12px;color:#444;left:985.50px;">LRS</span>
<span class="t" style="top:225px;font-size:8.7px;line-height:12px;color:#444;left:1025.30px;">LRS</span>
<span class="t" style="top:242px;font-size:8.7px;line-height:12px;color:#444;left:156.50px;">LSR</span>
<span class="t" style="top:242px;font-size:8.7px;line-height:12px;color:#444;left:198.50px;">Lost River 1 Airport</span>
<span class="t" style="top:242px;font-size:8.7px;line-height:12px;color:#444;left:429.70px;">Lost River, Alaska</span>
<span class="t" style="top:242px;font-size:8.7px;line-height:12px;color:#444;left:605.80px;">United States</span>
<span class="t" style="top:242px;font-size:8.7px;line-height:12px;color:#444;font-style:italic;left:513.00px;width:300px;text-align:right;">0</span>
<span class="t" style="top:242px;font-size:8.7px;line-height:12px;color:#444;font-style:italic;left:571.20px;width:300px;text-align:right;">0</span>
<span class="t" style="top:242px;font-size:8.7px;line-height:12px;color:#444;font-style:italic;left:677.20px;width:300px;text-align:right;">0</span>
<span class="t" style="top:242px;font-size:8.7px;line-height:12px;color:#444;left:985.50px;">LSR</span>
<span class="t" style="top:242px;font-size:8.7px;line-height:12px;color:#444;left:1025.30px;">LSR</span>
<span class="t" style="top:259px;font-size:8.7px;line-height:12px;color:#444;left:156.50px;">LZY</span>
<span class="t" style="top:259px;font-size:8.7px;line-height:12px;color:#444;left:198.50px;">Nyingchi Airport</span>
<span class="t" style="top:259px;font-size:8.7px;line-height:12px;color:#444;left:429.70px;">Nyingchi, Tibet</span>
<span class="t" style="top:259px;font-size:8.7px;line-height:12px;color:#444;left:605.80px;">China</span>
<span class="t" style="top:259px;font-size:8.7px;line-height:12px;color:#444;font-style:italic;left:513.00px;width:300px;text-align:right;">0</span>
<span class="t" style="top:259px;font-size:8.7px;line-height:12px;color:#444;font-style:italic;left:571.20px;width:300px;text-align:right;">0</span>
<span class="t" style="top:259px;font-size:8.7px;line-height:12px;color:#444;font-style:italic;left:677.20px;width:300px;text-align:right;">0</span>
<span class="t" style="top:259px;font-size:8.7px;line-height:12px;color:#444;left:985.50px;">LZY</span>
<span class="t" style="top:259px;font-size:8.7px;line-height:12px;color:#444;left:1025.30px;">LZY</span>
<span class="t" style="top:276px;font-size:8.7px;line-height:12px;color:#444;left:156.50px;">MDJ</span>
<span class="t" style="top:276px;font-size:8.7px;line-height:12px;color:#444;left:198.50px;">Madras City-county Airport</span>
<span class="t" style="top:276px;font-size:8.7px;line-height:12px;color:#444;left:429.70px;">Madras, Oregon</span>
<span class="t" style="top:276px;font-size:8.7px;line-height:12px;color:#444;left:605.80px;">United States</span>
<span class="t" style="top:276px;font-size:8.7px;line-height:12px;color:#444;font-style:italic;left:513.00px;width:300px;text-align:right;">0</span>
<span class="t" style="top:276px;font-size:8.7px;line-height:12px;color:#444;font-style:italic;left:571.20px;width:300px;text-align:right;">0</span>
<span class="t" style="top:276px;font-size:8.7px;line-height:12px;color:#444;font-style:italic;left:677.20px;width:300px;text-align:right;">0</span>
<span class="t" style="top:276px;font-size:8.7px;line-height:12px;color:#444;left:985.50px;">MDJ</span>
<span class="t" style="top:276px;font-size:8.7px;line-height:12px;color:#444;left:1025.30px;">MDJ</span>
<span class="t" style="top:293px;font-size:8.7px;line-height:12px;color:#444;left:156.50px;">MJR</span>
<span class="t" style="top:293px;font-size:8.7px;line-height:12px;color:#444;left:198.50px;">Miramar Airport</span>
<span class="t" style="top:293px;font-size:8.7px;line-height:12px;color:#444;left:429.70px;">Miramar, Buenos Aires</span>
<span class="t" style="top:293px;font-size:8.7px;line-height:12px;color:#444;left:605.80px;">Argentina</span>
<span class="t" style="top:293px;font-size:8.7px;line-height:12px;color:#444;font-style:italic;left:513.00px;width:300px;text-align:right;">0</span>
<span class="t" style="top:293px;font-size:8.7px;line-height:12px;color:#444;font-style:italic;left:571.20px;width:300px;text-align:right;">0</span>
<span class="t" style="top:293px;font-size:8.7px;line-height:12px;color:#444;font-style:italic;left:677.20px;width:300px;text-align:right;">0</span>
<span class="t" style="top:293px;font-size:8.7px;line-height:12px;color:#444;left:985.50px;">MJR</span>
<span class="t" style="top:293px;font-size:8.7px;line-height:12px;color:#444;left:1025.30px;">MJR</span>
<span class="t" style="top:309px;font-size:8.7px;line-height:12px;color:#444;left:156.50px;">MKS</span>
<span class="t" style="top:309px;font-size:8.7px;line-height:12px;color:#444;left:198.50px;">Mekane Selam Airport</span>
<span class="t" style="top:309px;font-size:8.7px;line-height:12px;color:#444;left:429.70px;">Mekane Selam</span>
<span class="t" style="top:309px;font-size:8.7px;line-height:12px;color:#444;left:605.80px;">Ethiopia</span>
<span class="t" style="top:309px;font-size:8.7px;line-height:12px;color:#444;font-style:italic;left:513.00px;width:300px;text-align:right;">0</span>
<span class="t" style="top:309px;font-size:8.7px;line-height:12px;color:#444;font-style:italic;left:571.20px;width:300px;text-align:right;">0</span>
<span class="t" style="top:309px;font-size:8.7px;line-height:12px;color:#444;font-style:italic;left:677.20px;width:300px;text-align:right;">0</span>
<span class="t" style="top:309px;font-size:8.7px;line-height:12px;color:#444;left:985.50px;">MKS</span>
<span class="t" style="top:309px;font-size:8.7px;line-height:12px;color:#444;left:1025.30px;">MKS</span>
<span class="t" style="top:326px;font-size:8.7px;line-height:12px;color:#444;left:156.50px;">MPB</span>
<span class="t" style="top:326px;font-size:8.7px;line-height:12px;color:#444;left:198.50px;">Miami Seaplane Base</span>
<span class="t" style="top:326px;font-size:8.7px;line-height:12px;color:#444;left:429.70px;">Watson Island, Miami-Dade County, Florida</span>
<span class="t" style="top:326px;font-size:8.7px;line-height:12px;color:#444;left:605.80px;">United States</span>
<span class="t" style="top:326px;font-size:8.7px;line-height:12px;color:#444;font-style:italic;left:513.00px;width:300px;text-align:right;">0</span>
<span class="t" style="top:326px;font-size:8.7px;line-height:12px;color:#444;font-style:italic;left:571.20px;width:300px;text-align:right;">0</span>
<span class="t" style="top:326px;font-size:8.7px;line-height:12px;color:#444;font-style:italic;left:677.20px;width:300px;text-align:right;">0</span>
<span class="t" style="top:326px;font-size:8.7px;line-height:12px;color:#444;left:985.50px;">MPB</span>
<span class="t" style="top:326px;font-size:8.7px;line-height:12px;color:#444;left:1025.30px;">MPB</span>
<span class="t" style="top:343px;font-size:8.7px;line-height:12px;color:#444;left:156.50px;">GND</span>
<span class="t" style="top:343px;font-size:8.7px;line-height:12px;color:#444;left:198.50px;">Grenada Airport</span>
<span class="t" style="top:343px;font-size:8.7px;line-height:12px;color:#444;left:429.70px;">Grenada, Caribe</span>
<span class="t" style="top:343px;font-size:8.7px;line-height:12px;color:#444;left:605.80px;">Caribe</span>
<span class="t" style="top:343px;font-size:8.7px;line-height:12px;color:#444;font-style:italic;left:513.00px;width:300px;text-align:right;">0</span>
<span class="t" style="top:343px;font-size:8.7px;line-height:12px;color:#444;font-style:italic;left:571.20px;width:300px;text-align:right;">0</span>
<span class="t" style="top:343px;font-size:8.7px;line-height:12px;color:#444;font-style:italic;left:677.20px;width:300px;text-align:right;">0</span>
<span class="t" style="top:343px;font-size:8.7px;line-height:12px;color:#444;left:985.50px;">GND</span>
<span class="t" style="top:343px;font-size:8.7px;line-height:12px;color:#444;left:1025.30px;">GND</span>
<span class="t" style="top:360px;font-size:8.7px;line-height:12px;color:#444;left:156.50px;">GNY</span>
<span class="t" style="top:360px;font-size:8.7px;line-height:12px;color:#444;left:198.50px;">Granby-grand County Airport</span>
<span class="t" style="top:360px;font-size:8.7px;line-height:12px;color:#444;left:429.70px;">Granby, Colorado</span>
<span class="t" style="top:360px;font-size:8.7px;line-height:12px;color:#444;left:605.80px;">United States</span>
<span class="t" style="top:360px;font-size:8.7px;line-height:12px;color:#444;font-style:italic;left:513.00px;width:300px;text-align:right;">0</span>
<span class="t" style="top:360px;font-size:8.7px;line-height:12px;color:#444;font-style:italic;left:571.20px;width:300px;text-align:right;">0</span>
<span class="t" style="top:360px;font-size:8.7px;line-height:12px;color:#444;font-style:italic;left:677.20px;width:300px;text-align:right;">0</span>
<span class="t" style="top:360px;font-size:8.7px;line-height:12px;color:#444;left:985.50px;">GNY</span>
<span class="t" style="top:360px;font-size:8.7px;line-height:12px;color:#444;left:1025.30px;">GNY</span>
<span class="t" style="top:377px;font-size:8.7px;line-height:12px;color:#444;left:156.50px;">GOL</span>
<span class="t" style="top:377px;font-size:8.7px;line-height:12px;color:#444;left:198.50px;">Gold Beach Municipal Airport</span>
<span class="t" style="top:377px;font-size:8.7px;line-height:12px;color:#444;left:429.70px;">Gold Beach, Oregon</span>
<span class="t" style="top:377px;font-size:8.7px;line-height:12px;color:#444;left:605.80px;">United States</span>
<span class="t" style="top:377px;font-size:8.7px;line-height:12px;color:#444;font-style:italic;left:513.00px;width:300px;text-align:right;">0</span>
<span class="t" style="top:377px;font-size:8.7px;line-height:12px;color:#444;font-style:italic;left:571.20px;width:300px;text-align:right;">0</span>
<span class="t" style="top:377px;font-size:8.7px;line-height:12px;color:#444;font-style:italic;left:677.20px;width:300px;text-align:right;">0</span>
<span class="t" style="top:377px;font-size:8.7px;line-height:12px;color:#444;left:985.50px;">GOL</span>
<span class="t" style="top:377px;font-size:8.7px;line-height:12px;color:#444;left:1025.30px;">GOL</span>
<span class="t" style="top:393px;font-size:8.7px;line-height:12px;color:#444;left:156.50px;">HAP</span>
<span class="t" style="top:393px;font-size:8.7px;line-height:12px;color:#444;left:198.50px;">Long Island Airport</span>
<span class="t" style="top:393px;font-size:8.7px;line-height:12px;color:#444;left:429.70px;">Long Island, Queensland</span>
<span class="t" style="top:393px;font-size:8.7px;line-height:12px;color:#444;left:605.80px;">Australia</span>
<span class="t" style="top:393px;font-size:8.7px;line-height:12px;color:#444;font-style:italic;left:513.00px;width:300px;text-align:right;">0</span>
<span class="t" style="top:393px;font-size:8.7px;line-height:12px;color:#444;font-style:italic;left:571.20px;width:300px;text-align:right;">0</span>
<span class="t" style="top:393px;font-size:8.7px;line-height:12px;color:#444;font-style:italic;left:677.20px;width:300px;text-align:right;">0</span>
<span class="t" style="top:393px;font-size:8.7px;line-height:12px;color:#444;left:985.50px;">HAP</span>
<span class="t" style="top:393px;font-size:8.7px;line-height:12px;color:#444;left:1025.30px;">HAP</span>
<span class="t" style="top:410px;font-size:8.7px;line-height:12px;color:#444;left:156.50px;">HAT</span>
<span class="t" style="top:410px;font-size:8.7px;line-height:12px;color:#444;left:198.50px;">Heathlands Airport</span>
<span class="t" style="top:410px;font-size:8.7px;line-height:12px;color:#444;left:429.70px;">Heathlands, Queensland</span>
<span class="t" style="top:410px;font-size:8.7px;line-height:12px;color:#444;left:605.80px;">Australia</span>
<span class="t" style="top:410px;font-size:8.7px;line-height:12px;color:#444;font-style:italic;left:513.00px;width:300px;text-align:right;">0</span>
<span class="t" style="top:410px;font-size:8.7px;line-height:12px;color:#444;font-style:italic;left:571.20px;width:300px;text-align:right;">0</span>
<span class="t" style="top:410px;font-size:8.7px;line-height:12px;color:#444;font-style:italic;left:677.20px;width:300px;text-align:right;">0</span>
<span class="t" style="top:410px;font-size:8.7px;line-height:12px;color:#444;left:985.50px;">HAT</span>
<span class="t" style="top:410px;font-size:8.7px;line-height:12px;color:#444;left:1025.30px;">HAT</span>
<span class="t" style="top:427px;font-size:8.7px;line-height:12px;color:#444;left:156.50px;">HAY</span>
<span class="t" style="top:427px;font-size:8.7px;line-height:12px;color:#444;left:198.50px;">Haycock Airport</span>
<span class="t" style="top:427px;font-size:8.7px;line-height:12px;color:#444;left:429.70px;">Haycock, Alaska</span>
<span class="t" style="top:427px;font-size:8.7px;line-height:12px;color:#444;left:605.80px;">United States</span>
<span class="t" style="top:427px;font-size:8.7px;line-height:12px;color:#444;font-style:italic;left:513.00px;width:300px;text-align:right;">0</span>
<span class="t" style="top:427px;font-size:8.7px;line-height:12px;color:#444;font-style:italic;left:571.20px;width:300px;text-align:right;">0</span>
<span class="t" style="top:427px;font-size:8.7px;line-height:12px;color:#444;font-style:italic;left:677.20px;width:300px;text-align:right;">0</span>
<span class="t" style="top:427px;font-size:8.7px;line-height:12px;color:#444;left:985.50px;">HAY</span>
<span class="t" style="top:427px;font-size:8.7px;line-height:12px;color:#444;left:1025.30px;">HAY</span>
<span class="t" style="top:444px;font-size:8.7px;line-height:12px;color:#444;left:156.50px;">HAZ</span>
<span class="t" style="top:444px;font-size:8.7px;line-height:12px;color:#444;left:198.50px;">Hatzfeldthaven Airport</span>
<span class="t" style="top:444px;font-size:8.7px;line-height:12px;color:#444;left:429.70px;">Hatzfeldthaven</span>
<span class="t" style="top:444px;font-size:8.7px;line-height:12px;color:#444;left:605.80px;">Papua New Guinea</span>
<span class="t" style="top:444px;font-size:8.7px;line-height:12px;color:#444;font-style:italic;left:513.00px;width:300px;text-align:right;">0</span>
<span class="t" style="top:444px;font-size:8.7px;line-height:12px;color:#444;font-style:italic;left:571.20px;width:300px;text-align:right;">0</span>
<span class="t" style="top:444px;font-size:8.7px;line-height:12px;color:#444;font-style:italic;left:677.20px;width:300px;text-align:right;">0</span>
<span class="t" style="top:444px;font-size:8.7px;line-height:12px;color:#444;left:985.50px;">HAZ</span>
<span class="t" style="top:444px;font-size:8.7px;line-height:12px;color:#444;left:1025.30px;">HAZ</span>
<span class="t" style="top:461px;font-size:8.7px;line-height:12px;color:#444;left:156.50px;">HBD</span>
<span class="t" style="top:461px;font-size:8.7px;line-height:12px;color:#444;left:198.50px;">Habi Airport</span>
<span class="t" style="top:461px;font-size:8.7px;line-height:12px;color:#444;left:429.70px;">Habi</span>
<span class="t" style="top:461px;font-size:8.7px;line-height:12px;color:#444;left:605.80px;">Papua New Guinea</span>
<span class="t" style="top:461px;font-size:8.7px;line-height:12px;color:#444;font-style:italic;left:513.00px;width:300px;text-align:right;">0</span>
<span class="t" style="top:461px;font-size:8.7px;line-height:12px;color:#444;font-style:italic;left:571.20px;width:300px;text-align:right;">0</span>
<span class="t" style="top:461px;font-size:8.7px;line-height:12px;color:#444;font-style:italic;left:677.20px;width:300px;text-align:right;">0</span>
<span class="t" style="top:461px;font-size:8.7px;line-height:12px;color:#444;left:985.50px;">HBD</span>
<span class="t" style="top:461px;font-size:8.7px;line-height:12px;color:#444;left:1025.30px;">HBD</span>
<span class="t" style="top:477px;font-size:8.7px;line-height:12px;color:#444;left:156.50px;">HBI</span>
<span class="t" style="top:477px;font-size:8.7px;line-height:12px;color:#444;left:198.50px;">Harbour Island Airport</span>
<span class="t" style="top:477px;font-size:8.7px;line-height:12px;color:#444;left:605.80px;">Bahamas</span>
<span class="t" style="top:477px;font-size:8.7px;line-height:12px;color:#444;font-style:italic;left:513.00px;width:300px;text-align:right;">0</span>
<span class="t" style="top:477px;font-size:8.7px;line-height:12px;color:#444;font-style:italic;left:571.20px;width:300px;text-align:right;">0</span>
<span class="t" style="top:477px;font-size:8.7px;line-height:12px;color:#444;font-style:italic;left:677.20px;width:300px;text-align:right;">0</span>
<span class="t" style="top:477px;font-size:8.7px;line-height:12px;color:#444;left:985.50px;">HBI</span>
<span class="t" style="top:477px;font-size:8.7px;line-height:12px;color:#444;left:1025.30px;">HBI</span>
<span class="t" style="top:494px;font-size:8.7px;line-height:12px;color:#444;left:156.50px;">HBN</span>
<span class="t" style="top:494px;font-size:8.7px;line-height:12px;color:#444;left:198.50px;">Phu Bon Airport</span>
<span class="t" style="top:494px;font-size:8.7px;line-height:12px;color:#444;left:429.70px;">Phu Bon</span>
<span class="t" style="top:494px;font-size:8.7px;line-height:12px;color:#444;left:605.80px;">Vietnam</span>
<span class="t" style="top:494px;font-size:8.7px;line-height:12px;color:#444;font-style:italic;left:513.00px;width:300px;text-align:right;">0</span>
<span class="t" style="top:494px;font-size:8.7px;line-height:12px;color:#444;font-style:italic;left:571.20px;width:300px;text-align:right;">0</span>
<span class="t" style="top:494px;font-size:8.7px;line-height:12px;color:#444;font-style:italic;left:677.20px;width:300px;text-align:right;">0</span>
<span class="t" style="top:494px;font-size:8.7px;line-height:12px;color:#444;left:985.50px;">HBN</span>
<span class="t" style="top:494px;font-size:8.7px;line-height:12px;color:#444;left:1025.30px;">HBN</span>
<span class="t" style="top:511px;font-size:8.7px;line-height:12px;color:#444;left:156.50px;">HBO</span>
<span class="t" style="top:511px;font-size:8.7px;line-height:12px;color:#444;left:198.50px;">Humboldt Municipal Airport</span>
<span class="t" style="top:511px;font-size:8.7px;line-height:12px;color:#444;left:429.70px;">Humboldt, Nebraska</span>
<span class="t" style="top:511px;font-size:8.7px;line-height:12px;color:#444;left:605.80px;">United States</span>
<span class="t" style="top:511px;font-size:8.7px;line-height:12px;color:#444;font-style:italic;left:513.00px;width:300px;text-align:right;">0</span>
<span class="t" style="top:511px;font-size:8.7px;line-height:12px;color:#444;font-style:italic;left:571.20px;width:300px;text-align:right;">0</span>
<span class="t" style="top:511px;font-size:8.7px;line-height:12px;color:#444;font-style:italic;left:677.20px;width:300px;text-align:right;">0</span>
<span class="t" style="top:511px;font-size:8.7px;line-height:12px;color:#444;left:985.50px;">HBO</span>
<span class="t" style="top:511px;font-size:8.7px;line-height:12px;color:#444;left:1025.30px;">HBO</span>
<span class="t" style="top:528px;font-size:8.7px;line-height:12px;color:#444;left:156.50px;">HKV</span>
<span class="t" style="top:528px;font-size:8.7px;line-height:12px;color:#444;left:198.50px;">Haskovo Airport</span>
<span class="t" style="top:528px;font-size:8.7px;line-height:12px;color:#444;left:429.70px;">Haskovo</span>
<span class="t" style="top:528px;font-size:8.7px;line-height:12px;color:#444;left:605.80px;">Bulgaria</span>
<span class="t" style="top:528px;font-size:8.7px;line-height:12px;color:#444;font-style:italic;left:513.00px;width:300px;text-align:right;">0</span>
<span class="t" style="top:528px;font-size:8.7px;line-height:12px;color:#444;font-style:italic;left:571.20px;width:300px;text-align:right;">0</span>
<span class="t" style="top:528px;font-size:8.7px;line-height:12px;color:#444;font-style:italic;left:677.20px;width:300px;text-align:right;">0</span>
<span class="t" style="top:528px;font-size:8.7px;line-height:12px;color:#444;left:985.50px;">HKV</span>
<span class="t" style="top:528px;font-size:8.7px;line-height:12px;color:#444;left:1025.30px;">HKV</span>
<span class="t" style="top:545px;font-size:8.7px;line-height:12px;color:#444;left:156.50px;">HNN</span>
<span class="t" style="top:545px;font-size:8.7px;line-height:12px;color:#444;left:198.50px;">Honinabi Airport</span>
<span class="t" style="top:545px;font-size:8.7px;line-height:12px;color:#444;left:429.70px;">Honinabi</span>
<span class="t" style="top:545px;font-size:8.7px;line-height:12px;color:#444;left:605.80px;">Papua New Guinea</span>
<span class="t" style="top:545px;font-size:8.7px;line-height:12px;color:#444;font-style:italic;left:513.00px;width:300px;text-align:right;">0</span>
<span class="t" style="top:545px;font-size:8.7px;line-height:12px;color:#444;font-style:italic;left:571.20px;width:300px;text-align:right;">0</span>
<span class="t" style="top:545px;font-size:8.7px;line-height:12px;color:#444;font-style:italic;left:677.20px;width:300px;text-align:right;">0</span>
<span class="t" style="top:545px;font-size:8.7px;line-height:12px;color:#444;left:985.50px;">HNN</span>
<span class="t" style="top:545px;font-size:8.7px;line-height:12px;color:#444;left:1025.30px;">HNN</span>
<span class="t" style="top:561px;font-size:8.7px;line-height:12px;color:#444;left:156.50px;">HZV</span>
<span class="t" style="top:561px;font-size:8.7px;line-height:12px;color:#444;left:198.50px;">Hazyview Airport</span>
<span class="t" style="top:561px;font-size:8.7px;line-height:12px;color:#444;left:429.70px;">Hazyview</span>
<span class="t" style="top:561px;font-size:8.7px;line-height:12px;color:#444;left:605.80px;">South Africa</span>
<span class="t" style="top:561px;font-size:8.7px;line-height:12px;color:#444;font-style:italic;left:513.00px;width:300px;text-align:right;">0</span>
<span class="t" style="top:561px;font-size:8.7px;line-height:12px;color:#444;font-style:italic;left:571.20px;width:300px;text-align:right;">0</span>
<span class="t" style="top:561px;font-size:8.7px;line-height:12px;color:#444;font-style:italic;left:677.20px;width:300px;text-align:right;">0</span>
<span class="t" style="top:561px;font-size:8.7px;line-height:12px;color:#444;left:985.50px;">HZV</span>
<span class="t" style="top:561px;font-size:8.7px;line-height:12px;color:#444;left:1025.30px;">HZV</span>
<span class="t" style="top:578px;font-size:8.7px;line-height:12px;color:#444;left:156.50px;">IBL</span>
<span class="t" style="top:578px;font-size:8.7px;line-height:12px;color:#444;left:198.50px;">Indigo Bay Lodge Airport</span>
<span class="t" style="top:578px;font-size:8.7px;line-height:12px;color:#444;left:429.70px;">Bazaruto Island</span>
<span class="t" style="top:578px;font-size:8.7px;line-height:12px;color:#444;left:605.80px;">Mozambique</span>
<span class="t" style="top:578px;font-size:8.7px;line-height:12px;color:#444;font-style:italic;left:513.00px;width:300px;text-align:right;">0</span>
<span class="t" style="top:578px;font-size:8.7px;line-height:12px;color:#444;font-style:italic;left:571.20px;width:300px;text-align:right;">0</span>
<span class="t" style="top:578px;font-size:8.7px;line-height:12px;color:#444;font-style:italic;left:677.20px;width:300px;text-align:right;">0</span>
<span class="t" style="top:578px;font-size:8.7px;line-height:12px;color:#444;left:985.50px;">IBL</span>
<span class="t" style="top:578px;font-size:8.7px;line-height:12px;color:#444;left:1025.30px;">IBL</span>
<span class="t" style="top:595px;font-size:8.7px;line-height:12px;color:#444;left:156.50px;">JDA</span>
<span class="t" style="top:595px;font-size:8.7px;line-height:12px;color:#444;left:198.50px;">Grant County Regional Airport</span>
<span class="t" style="top:595px;font-size:8.7px;line-height:12px;color:#444;left:429.70px;">John Day, Oregon</span>
<span class="t" style="top:595px;font-size:8.7px;line-height:12px;color:#444;left:605.80px;">United States</span>
<span class="t" style="top:595px;font-size:8.7px;line-height:12px;color:#444;font-style:italic;left:513.00px;width:300px;text-align:right;">0</span>
<span class="t" style="top:595px;font-size:8.7px;line-height:12px;color:#444;font-style:italic;left:571.20px;width:300px;text-align:right;">0</span>
<span class="t" style="top:595px;font-size:8.7px;line-height:12px;color:#444;font-style:italic;left:677.20px;width:300px;text-align:right;">0</span>
<span class="t" style="top:595px;font-size:8.7px;line-height:12px;color:#444;left:985.50px;">JDA</span>
<span class="t" style="top:595px;font-size:8.7px;line-height:12px;color:#444;left:1025.30px;">JDA</span>
<span class="t" style="top:612px;font-size:8.7px;line-height:12px;color:#444;left:156.50px;">JTI</span>
<span class="t" style="top:612px;font-size:8.7px;line-height:12px;color:#444;left:198.50px;">Jatao Airport</span>
<span class="t" style="top:612px;font-size:8.7px;line-height:12px;color:#444;left:429.70px;">Jatao, Goiás</span>
<span class="t" style="top:612px;font-size:8.7px;line-height:12px;color:#444;left:605.80px;">Brazil</span>
<span class="t" style="top:612px;font-size:8.7px;line-height:12px;color:#444;font-style:italic;left:513.00px;width:300px;text-align:right;">0</span>
<span class="t" style="top:612px;font-size:8.7px;line-height:12px;color:#444;font-style:italic;left:571.20px;width:300px;text-align:right;">0</span>
<span class="t" style="top:612px;font-size:8.7px;line-height:12px;color:#444;font-style:italic;left:677.20px;width:300px;text-align:right;">0</span>
<span class="t" style="top:612px;font-size:8.7px;line-height:12px;color:#444;left:985.50px;">JTI</span>
<span class="t" style="top:612px;font-size:8.7px;line-height:12px;color:#444;left:1025.30px;">JTI</span>
<span class="t" style="top:628px;font-size:8.7px;line-height:12px;color:#444;left:156.50px;">JVI</span>
<span class="t" style="top:628px;font-size:8.7px;line-height:12px;color:#444;left:198.50px;">Central Jersey Regional Airport</span>
<span class="t" style="top:628px;font-size:8.7px;line-height:12px;color:#444;left:429.70px;">Hillsborough Township</span>
<span class="t" style="top:628px;font-size:8.7px;line-height:12px;color:#444;left:605.80px;">New Jersey</span>
<span class="t" style="top:628px;font-size:8.7px;line-height:12px;color:#444;font-style:italic;left:513.00px;width:300px;text-align:right;">0</span>
<span class="t" style="top:628px;font-size:8.7px;line-height:12px;color:#444;font-style:italic;left:571.20px;width:300px;text-align:right;">0</span>
<span class="t" style="top:628px;font-size:8.7px;line-height:12px;color:#444;font-style:italic;left:677.20px;width:300px;text-align:right;">0</span>
<span class="t" style="top:628px;font-size:8.7px;line-height:12px;color:#444;left:985.50px;">JVI</span>
<span class="t" style="top:628px;font-size:8.7px;line-height:12px;color:#444;left:1025.30px;">JVI</span>
<span class="t" style="top:645px;font-size:8.7px;line-height:12px;color:#444;left:156.50px;">KKO</span>
<span class="t" style="top:645px;font-size:8.7px;line-height:12px;color:#444;left:198.50px;">Kaikohe Airport</span>
<span class="t" style="top:645px;font-size:8.7px;line-height:12px;color:#444;left:429.70px;">Kaikohe</span>
<span class="t" style="top:645px;font-size:8.7px;line-height:12px;color:#444;left:605.80px;">New Zealand</span>
<span class="t" style="top:645px;font-size:8.7px;line-height:12px;color:#444;font-style:italic;left:513.00px;width:300px;text-align:right;">0</span>
<span class="t" style="top:645px;font-size:8.7px;line-height:12px;color:#444;font-style:italic;left:571.20px;width:300px;text-align:right;">0</span>
<span class="t" style="top:645px;font-size:8.7px;line-height:12px;color:#444;font-style:italic;left:677.20px;width:300px;text-align:right;">0</span>
<span class="t" style="top:645px;font-size:8.7px;line-height:12px;color:#444;left:985.50px;">KKO</span>
<span class="t" style="top:645px;font-size:8.7px;line-height:12px;color:#444;left:1025.30px;">KKO</span>
</div></div>
<div class="r" style="left:1050.00px;top:189.30px;width:12.20px;height:459.45px;background:#e9e8e7;"></div>
<svg class="r" style="left:1052.60px;top:640.00px" width="7" height="5" viewBox="0 0 7 5"><path d="M.8 .8l2.600 2.800 2.600-2.800" fill="none" stroke="#444" stroke-width="1.300"/></svg>
<div class="r" style="left:107.60px;top:648.75px;width:942.40px;height:12.45px;background:#ebeae9;"></div>
<div class="r" style="left:119.50px;top:648.75px;width:896.50px;height:12.45px;background:#c2c1c0;"></div>
<div class="r" style="left:1050.00px;top:648.75px;width:12.20px;height:12.45px;background:#fff;"></div>
<svg class="r" style="left:111.00px;top:651.60px" width="5" height="7" viewBox="0 0 5 7"><path d="M3.800 .8l-2.800 2.600 2.800 2.600" fill="none" stroke="#444" stroke-width="1.300"/></svg>
<svg class="r" style="left:1041.60px;top:651.60px" width="5" height="7" viewBox="0 0 5 7"><path d="M.8 .8l2.800 2.600-2.800 2.600" fill="none" stroke="#444" stroke-width="1.300"/></svg>
<div class="r" style="left:74.00px;top:661.20px;width:1133.00px;height:17.20px;background:#f6f5f4;"></div>
<div class="r" style="left:74.00px;top:660.80px;width:1133.00px;height:0.90px;background:#e4e2e0;"></div>
<span class="t" style="top:665px;font-size:8.5px;line-height:12px;color:#555;left:78.10px;">TABLE: Airports (7,012 rows) COLUMN: Longitude (5,554 distinct values)</span>
<span class="t" style="top:665px;font-size:8.2px;line-height:11px;color:#555;left:902.80px;width:300px;text-align:right;">UPDATE AVAILABLE (CLICK TO DOWNLOAD)</span>
<div class="r" style="left:1061.60px;top:159.40px;width:1.00px;height:29.90px;background:#eae8e6;"></div>
<div class="r" style="left:1063px;top:159.4px;width:144px;height:501.800px;overflow:hidden"><div class="r" style="left:-1063px;top:-159.400px;width:1280px;height:720px">
<span class="t" style="top:171px;font-size:13.2px;line-height:17px;color:#2b2a29;left:1070.00px;">Fields</span>
<svg class="r" style="left:1190.00px;top:173.60px" width="9" height="12" viewBox="0 0 9 12"><path d="M2 1.400l5 4.400-5 4.400" fill="none" stroke="#555" stroke-width="0.9"/></svg>
<div class="r" style="left:1066.00px;top:202.70px;width:137.40px;height:22.50px;background:#fff;box-shadow:inset 0 0 0 .8px #dfdddb"></div>
<span class="t" style="top:209px;font-size:10px;line-height:13px;color:#4a4a4a;letter-spacing:-0.15px;left:1095.60px;">Search</span>
<div class="r" style="left:1063.00px;top:228.40px;width:144.00px;height:0.80px;background:#e9e7e5;"></div>
<div class="r" style="left:1202.30px;top:237.50px;width:3.70px;height:375.50px;background:#c9c7c5;"></div>
<div class="r" style="left:1066.00px;top:280.50px;width:136.30px;height:20.75px;background:#d2d0ce;"></div>
<svg class="r" style="left:1065.60px;top:244.50px" width="11" height="7" viewBox="0 0 11 7"><path d="M.8 1l4.600 4.600 4.600-4.600" fill="none" stroke="#555" stroke-width="0.8"/></svg>
<svg class="r" style="left:1080.60px;top:242.30px" width="12" height="11" viewBox="0 0 12 11"><g fill="none" stroke="#333" stroke-width="0.9"><rect x=".8" y=".8" width="10.200" height="9"/><path d="M.8 4.400h10.200M.8 7.200h10.200M4.200 2.200v7.600M7.600 2.200v7.600"/><path d="M.8 1.600h10.200" stroke-width="1.600"/></g></svg>
<span class="t" style="top:241px;font-size:9.4px;line-height:13px;color:#2b2a29;left:1101.50px;">Aircrafts</span>
<svg class="r" style="left:1065.60px;top:266.00px" width="11" height="7" viewBox="0 0 11 7"><path d="M.8 1l4.600 4.600 4.600-4.600" fill="none" stroke="#555" stroke-width="0.8"/></svg>
<svg class="r" style="left:1080.60px;top:263.80px" width="12" height="11" viewBox="0 0 12 11"><g fill="none" stroke="#333" stroke-width="0.9"><rect x=".8" y=".8" width="10.200" height="9"/><path d="M.8 4.400h10.200M.8 7.200h10.200M4.200 2.200v7.600M7.600 2.200v7.600"/><path d="M.8 1.600h10.200" stroke-width="1.600"/></g></svg>
<span class="t" style="top:262px;font-size:9.4px;line-height:13px;color:#2b2a29;left:1101.50px;">Airlines</span>
<svg class="r" style="left:1065.60px;top:287.75px" width="11" height="7" viewBox="0 0 11 7"><path d="M.8 1l4.600 4.600 4.600-4.600" fill="none" stroke="#555" stroke-width="0.8"/></svg>
<svg class="r" style="left:1080.60px;top:285.55px" width="12" height="11" viewBox="0 0 12 11"><g fill="none" stroke="#333" stroke-width="0.9"><rect x=".8" y=".8" width="10.200" height="9"/><path d="M.8 4.400h10.200M.8 7.200h10.200M4.200 2.200v7.600M7.600 2.200v7.600"/><path d="M.8 1.600h10.200" stroke-width="1.600"/></g></svg>
<span class="t" style="top:284px;font-size:9.4px;line-height:13px;color:#2b2a29;left:1101.50px;">Airports</span>
<svg class="r" style="left:1074.30px;top:310.10px" width="11" height="10" viewBox="0 0 11 10"><rect x=".2" y=".2" width="10.600" height="8.800" fill="#262626"/><rect x="1.600" y="2.600" width="1.500" height="5.400" fill="#f3f2f1"/><rect x="4.200" y="2.600" width="1.100" height="5.400" fill="#cfcfcf"/><path d="M6.600 7.800c1.200 0 1.400-1 1.600-2.400s.6-2.400 1.600-2.400M7 5h2.400" fill="none" stroke="#f3f2f1" stroke-width="0.9"/><path d="M8.200 6.400l1.800 1.800M10 6.400l-1.800 1.800" stroke="#dcdcdc" stroke-width="0.6"/></svg>
<span class="t" style="top:308px;font-size:9.4px;line-height:13px;color:#b5b3b1;left:1092.70px;">AC1</span>
<svg class="r" style="left:1074.30px;top:329.00px" width="11" height="10" viewBox="0 0 11 10"><rect x=".2" y=".2" width="10.600" height="8.800" fill="#262626"/><rect x="1.600" y="2.600" width="1.500" height="5.400" fill="#f3f2f1"/><rect x="4.200" y="2.600" width="1.100" height="5.400" fill="#cfcfcf"/><path d="M6.600 7.800c1.200 0 1.400-1 1.600-2.400s.6-2.400 1.600-2.400M7 5h2.400" fill="none" stroke="#f3f2f1" stroke-width="0.9"/><path d="M8.200 6.400l1.800 1.800M10 6.400l-1.800 1.800" stroke="#dcdcdc" stroke-width="0.6"/></svg>
<span class="t" style="top:328px;font-size:9.4px;line-height:13px;color:#2b2a29;left:1092.70px;">ACode</span>
<div class="r" style="left:1066.00px;top:477.00px;width:136.30px;height:18.60px;background:#d2d0ce;"></div>
<span class="t" style="top:347px;font-size:9.4px;line-height:13px;color:#2b2a29;left:1092.50px;">Country</span>
<span class="t" style="top:366px;font-size:9.4px;line-height:13px;color:#2b2a29;left:1092.50px;">IATA</span>
<span class="t" style="top:385px;font-size:9.4px;line-height:13px;color:#2b2a29;left:1092.50px;">ICAO</span>
<span class="t" style="top:404px;font-size:9.4px;line-height:13px;color:#2b2a29;left:1092.50px;">isClosed</span>
<span class="t" style="top:424px;font-size:9.4px;line-height:13px;color:#2b2a29;left:1092.50px;">Issue?</span>
<span class="t" style="top:443px;font-size:9.4px;line-height:13px;color:#2b2a29;left:1092.50px;">Latitude</span>
<span class="t" style="top:462px;font-size:9.4px;line-height:13px;color:#2b2a29;left:1092.50px;">Location</span>
<span class="t" style="top:481px;font-size:9.4px;line-height:13px;color:#2b2a29;left:1092.50px;">Longitude</span>
<span class="t" style="top:501px;font-size:9.4px;line-height:13px;color:#2b2a29;left:1092.50px;">Name</span>
<svg class="r" style="left:1065.60px;top:526.00px" width="11" height="7" viewBox="0 0 11 7"><path d="M.8 1l4.600 4.600 4.600-4.600" fill="none" stroke="#555" stroke-width="0.8"/></svg>
<svg class="r" style="left:1080.60px;top:523.80px" width="12" height="11" viewBox="0 0 12 11"><g fill="none" stroke="#333" stroke-width="0.9"><rect x=".8" y=".8" width="10.200" height="9"/><path d="M.8 4.400h10.200M.8 7.200h10.200M4.200 2.200v7.600M7.600 2.200v7.600"/><path d="M.8 1.600h10.200" stroke-width="1.600"/></g></svg>
<span class="t" style="top:522px;font-size:9.4px;line-height:13px;color:#2b2a29;left:1101.50px;">Calendar</span>
<svg class="r" style="left:1065.60px;top:547.65px" width="11" height="7" viewBox="0 0 11 7"><path d="M.8 1l4.600 4.600 4.600-4.600" fill="none" stroke="#555" stroke-width="0.8"/></svg>
<svg class="r" style="left:1080.60px;top:545.45px" width="12" height="11" viewBox="0 0 12 11"><g fill="none" stroke="#333" stroke-width="0.9"><rect x=".8" y=".8" width="10.200" height="9"/><path d="M.8 4.400h10.200M.8 7.200h10.200M4.200 2.200v7.600M7.600 2.200v7.600"/><path d="M.8 1.600h10.200" stroke-width="1.600"/></g></svg>
<span class="t" style="top:544px;font-size:9.4px;line-height:13px;color:#2b2a29;left:1101.50px;">DailyFlights</span>
<svg class="r" style="left:1065.60px;top:569.30px" width="11" height="7" viewBox="0 0 11 7"><path d="M.8 1l4.600 4.600 4.600-4.600" fill="none" stroke="#555" stroke-width="0.8"/></svg>
<svg class="r" style="left:1080.60px;top:567.10px" width="12" height="11" viewBox="0 0 12 11"><g fill="none" stroke="#333" stroke-width="0.9"><rect x=".8" y=".8" width="10.200" height="9"/><path d="M.8 4.400h10.200M.8 7.200h10.200M4.200 2.200v7.600M7.600 2.200v7.600"/><path d="M.8 1.600h10.200" stroke-width="1.600"/></g></svg>
<span class="t" style="top:565px;font-size:9.4px;line-height:13px;color:#2b2a29;left:1101.50px;">Flight</span>
<svg class="r" style="left:1065.60px;top:590.95px" width="11" height="7" viewBox="0 0 11 7"><path d="M.8 1l4.600 4.600 4.600-4.600" fill="none" stroke="#555" stroke-width="0.8"/></svg>
<svg class="r" style="left:1080.60px;top:588.75px" width="12" height="11" viewBox="0 0 12 11"><g fill="none" stroke="#333" stroke-width="0.9"><rect x=".8" y=".8" width="10.200" height="9"/><path d="M.8 4.400h10.200M.8 7.200h10.200M4.200 2.200v7.600M7.600 2.200v7.600"/><path d="M.8 1.600h10.200" stroke-width="1.600"/></g></svg>
<span class="t" style="top:587px;font-size:9.4px;line-height:13px;color:#2b2a29;left:1101.50px;">Flight_Dep</span>
<svg class="r" style="left:1065.60px;top:612.60px" width="11" height="7" viewBox="0 0 11 7"><path d="M.8 1l4.600 4.600 4.600-4.600" fill="none" stroke="#555" stroke-width="0.8"/></svg>
<svg class="r" style="left:1080.60px;top:610.40px" width="12" height="11" viewBox="0 0 12 11"><g fill="none" stroke="#333" stroke-width="0.9"><rect x=".8" y=".8" width="10.200" height="9"/><path d="M.8 4.400h10.200M.8 7.200h10.200M4.200 2.200v7.600M7.600 2.200v7.600"/><path d="M.8 1.600h10.200" stroke-width="1.600"/></g></svg>
<span class="t" style="top:609px;font-size:9.4px;line-height:13px;color:#2b2a29;left:1101.50px;">Flights</span>
<svg class="r" style="left:1065.60px;top:634.25px" width="11" height="7" viewBox="0 0 11 7"><path d="M.8 1l4.600 4.600 4.600-4.600" fill="none" stroke="#555" stroke-width="0.8"/></svg>
<svg class="r" style="left:1080.60px;top:632.05px" width="12" height="11" viewBox="0 0 12 11"><g fill="none" stroke="#333" stroke-width="0.9"><rect x=".8" y=".8" width="10.200" height="9"/><path d="M.8 4.400h10.200M.8 7.200h10.200M4.200 2.200v7.600M7.600 2.200v7.600"/><path d="M.8 1.600h10.200" stroke-width="1.600"/></g></svg>
<span class="t" style="top:630px;font-size:9.4px;line-height:13px;color:#2b2a29;left:1101.50px;">FlightSector</span>
<svg class="r" style="left:1065.60px;top:655.90px" width="11" height="7" viewBox="0 0 11 7"><path d="M.8 1l4.600 4.600 4.600-4.600" fill="none" stroke="#555" stroke-width="0.8"/></svg>
<svg class="r" style="left:1080.60px;top:653.70px" width="12" height="11" viewBox="0 0 12 11"><g fill="none" stroke="#333" stroke-width="0.9"><rect x=".8" y=".8" width="10.200" height="9"/><path d="M.8 4.400h10.200M.8 7.200h10.200M4.200 2.200v7.600M7.600 2.200v7.600"/><path d="M.8 1.600h10.200" stroke-width="1.600"/></g></svg>
<span class="t" style="top:652px;font-size:9.4px;line-height:13px;color:#2b2a29;left:1101.50px;">FlightTypes</span>
</div></div>
<svg class="r" style="left:810px;top:160px" width="300" height="160" viewBox="810 160 300 160">
<path d="M899.3 167.750H1073.700A23 23 0 0 1 1096.700 190.750V287.200A23 23 0 0 1 1073.700 310.200H899.300A23 23 0 0 1 876.300 287.200L818.200 300L876.300 248.400V190.750A23 23 0 0 1 899.300 167.750Z" fill="#4472c4" stroke="#2f528f" stroke-width="1"/></svg>
<span class="t" style="left:836px;width:300px;text-align:center;top:179.20px;font-family:'Noto Sans CJK SC','Liberation Sans',sans-serif;font-size:20.9px;line-height:36px;color:#fff">If no Longitude</span>
<span class="t" style="left:836px;width:300px;text-align:center;top:206.40px;font-family:'Noto Sans CJK SC','Liberation Sans',sans-serif;font-size:20.9px;line-height:36px;color:#fff">values exist,</span>
<span class="t" style="left:836px;width:300px;text-align:center;top:233.60px;font-family:'Noto Sans CJK SC','Liberation Sans',sans-serif;font-size:20.9px;line-height:36px;color:#fff">enrichment</span>
<span class="t" style="left:836px;width:300px;text-align:center;top:260.80px;font-family:'Noto Sans CJK SC','Liberation Sans',sans-serif;font-size:20.9px;line-height:36px;color:#fff">provides them</span>
<svg class="r" style="left:1183px;top:686px" width="28" height="32" viewBox="1183 686 28 32">
<defs><linearGradient id="lg" x1="0" y1="0" x2="0" y2="1"><stop offset="0" stop-color="#22a0f8"/><stop offset="1" stop-color="#157fdc"/></linearGradient></defs>
<path d="M1192.600 711.200l-1.600 4.500h11l3-4.500z" fill="#bcbdbf"/>
<path d="M1201.250 689.600l5.400 9.700-5.400 11.900h-3l-1.500-11.900z" fill="#a3a4a6"/>
<path d="M1196.700 699.300l4.500-6.800 5.400 6.800z" fill="#c2c3c5"/>
<path d="M1191 688.600h10.250l-4.550 10.700 4.550 11.900h-10.250l-5.750-11.900z" fill="url(#lg)"/>
</svg>
<span class="t" style="left:1209px;top:698.400px;font-size:7.300px;line-height:12px;letter-spacing:-0.120px;color:#43455a;font-family:'DejaVu Sans','Liberation Sans',sans-serif">Sharper<span style="color:#3a9aea">Software</span></span>
</div></body></html>
